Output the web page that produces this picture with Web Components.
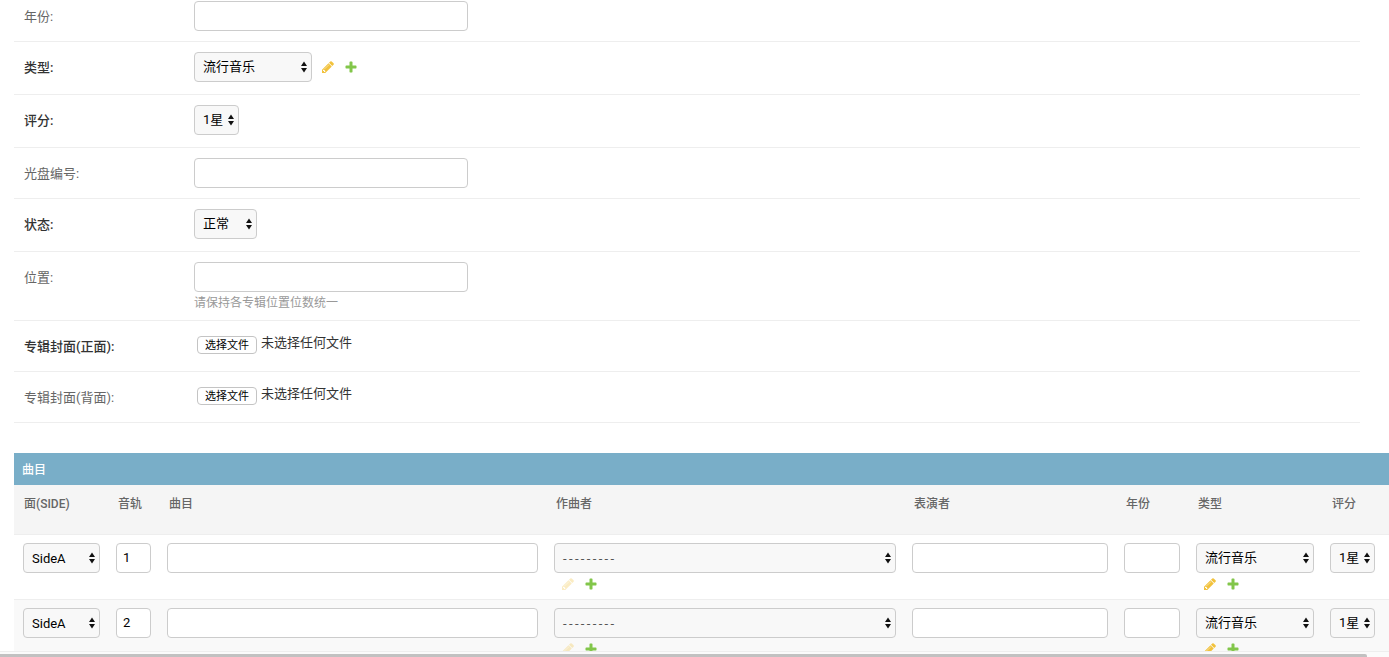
<!DOCTYPE html>
<html lang="zh">
<head>
<meta charset="utf-8">
<title>专辑</title>
<style>
  html, body {
    margin: 0;
    height: 657px;
    overflow: hidden;
    background: #fff;
    font: 13px Roboto, "Noto Sans CJK SC", sans-serif;
    color: #333;
  }
  /* latin option text sits a pixel lower than the cjk text in the reference */
  .latin {
    display: block;
    margin-top: 2px;
  }
  .dashes {
    letter-spacing: 2.35px;
    color: #555;
  }
</style>
</head>
<body>

<album-page>
  <form-row label="年份:"><ui-input></ui-input></form-row>
  <form-row label="类型:" required>
    <ui-select width="118">流行音乐</ui-select>
    <related-links slot="after"></related-links>
  </form-row>
  <form-row label="评分:" required><ui-select width="45">1星</ui-select></form-row>
  <form-row label="光盘编号:"><ui-input></ui-input></form-row>
  <form-row label="状态:" required><ui-select width="63">正常</ui-select></form-row>
  <form-row label="位置:" help="请保持各专辑位置位数统一"><ui-input></ui-input></form-row>
  <form-row label="专辑封面(正面):" required><file-input></file-input></form-row>
  <form-row label="专辑封面(背面):"><file-input></file-input></form-row>

  <inline-group title="曲目">
    <track-head>
      <span>面(SIDE)</span><span>音轨</span><span>曲目</span><span>作曲者</span>
      <span>表演者</span><span>年份</span><span>类型</span><span>评分</span>
    </track-head>
    <track-row>
      <ui-select><span class="latin">SideA</span></ui-select>
      <ui-input>1</ui-input>
      <ui-input></ui-input>
      <div><ui-select><span class="latin dashes">---------</span></ui-select><related-links stacked faded></related-links></div>
      <ui-input></ui-input>
      <ui-input></ui-input>
      <div><ui-select>流行音乐</ui-select><related-links stacked></related-links></div>
      <ui-select>1星</ui-select>
    </track-row>
    <track-row alt>
      <ui-select><span class="latin">SideA</span></ui-select>
      <ui-input>2</ui-input>
      <ui-input></ui-input>
      <div><ui-select><span class="latin dashes">---------</span></ui-select><related-links stacked faded></related-links></div>
      <ui-input></ui-input>
      <ui-input></ui-input>
      <div><ui-select>流行音乐</ui-select><related-links stacked></related-links></div>
      <ui-select>1星</ui-select>
    </track-row>
  </inline-group>
</album-page>

<script>
  (function () {

    // small helper, every element below just hands over its shadow markup
    function shadow(el, html) {
      el.attachShadow({ mode: 'open' }).innerHTML = html;
    }

    class AlbumPage extends HTMLElement {
      connectedCallback() {
        shadow(this, `
          <style>
            :host {
              display: block;
              position: relative;
              height: 657px;
              overflow: hidden;
            }
            .scroll {
              position: absolute;
              left: 0;
              right: 0;
              bottom: 0;
              height: 5px;
              background: #fbfbfb;
              border-top: 1px solid #eee;
            }
            .thumb {
              position: absolute;
              left: 0;
              bottom: 0;
              width: 1367px;
              height: 3px;
              background: #c1c1c1;
              border-radius: 0 2px 0 0;
            }
          </style>
          <slot></slot>
          <div class="scroll"><div class="thumb"></div></div>`);
      }
    }

    class FormRow extends HTMLElement {
      connectedCallback() {
        const help = this.getAttribute('help');
        shadow(this, `
          <style>
            :host {
              display: flex;
              margin: 0 29px 0 14px;
              padding: 10px 0 10px 10px;
              border-bottom: 1px solid #eee;
            }
            :host(:first-child) { padding-top: 1px; }
            label {
              width: 170px;
              flex: none;
              padding-top: 1px;
              line-height: 30px;
              height: 29px;
              color: #666;
            }
            :host([required]) label {
              color: #333;
              font-weight: 500;
            }
            .line { display: flex; }
            .help {
              margin-top: 4px;
              font-size: 12px;
              line-height: 14px;
              color: #999;
            }
          </style>
          <label>${this.getAttribute('label')}</label>
          <div>
            <div class="line"><slot></slot><slot name="after"></slot></div>
            ${help ? `<div class="help">${help}</div>` : ''}
          </div>`);
      }
    }

    class UiInput extends HTMLElement {
      connectedCallback() {
        shadow(this, `
          <style>
            :host {
              display: block;
              box-sizing: border-box;
              width: 274px;
              height: 30px;
              padding: 0 6px;
              line-height: 28px;
              background: #fff;
              border: 1px solid #ccc;
              border-radius: 4px;
              color: #000;
            }
            :host-context(track-row) { width: auto; }
          </style>
          <slot></slot>`);
      }
    }

    class UiSelect extends HTMLElement {
      connectedCallback() {
        const width = this.getAttribute('width');
        shadow(this, `
          <style>
            :host {
              display: flex;
              align-items: center;
              justify-content: space-between;
              box-sizing: border-box;
              width: ${width ? width + 'px' : 'auto'};
              height: 30px;
              margin-bottom: 2px;
              padding: 0 4px 0 8px;
              background: #f8f8f8;
              border: 1px solid #ccc;
              border-radius: 4px;
              color: #000;
              line-height: 20px;
              white-space: nowrap;
            }
            svg { flex: none; display: block; }
          </style>
          <slot></slot>
          <svg width="6" height="12" viewBox="0 0 6 12">
            <path d="M3 0.5 L6 5 H0 Z M0 7 H6 L3 11.5 Z" fill="#111"/>
          </svg>`);
      }
    }

    class RelatedLinks extends HTMLElement {
      connectedCallback() {
        shadow(this, `
          <style>
            :host {
              display: flex;
              gap: 9px;
              margin-left: 9px;
              height: 30px;
              align-items: center;
            }
            :host([stacked]) {
              height: 14px;
              margin: 4px 0 0 7px;
            }
            :host([faded]) .change { opacity: 0.3; }
            svg { display: block; width: 14px; height: 14px; }
          </style>
          <svg class="change" viewBox="0 0 1792 1792"><path fill="#f2c23c" d="M491 1536l91-91-235-235-91 91v107h128v128h107zm523-928q0-22-22-22-10 0-17 7l-542 542q-7 7-7 17 0 22 22 22 10 0 17-7l542-542q7-7 7-17zm-54-192l416 416-832 832h-416v-416zm683 96q0 53-37 90l-166 166-416-416 166-165q36-38 90-38 53 0 91 38l235 234q37 39 37 91z"/></svg>
          <svg viewBox="0 0 1792 1792"><path fill="#82c64a" d="M1600 796v192q0 40-28 68t-68 28h-416v416q0 40-28 68t-68 28h-192q-40 0-68-28t-28-68v-416h-416q-40 0-68-28t-28-68v-192q0-40 28-68t68-28h416v-416q0-40 28-68t68-28h192q40 0 68 28t28 68v416h416q40 0 68 28t28 68z"/></svg>`);
      }
    }

    class FileInput extends HTMLElement {
      connectedCallback() {
        shadow(this, `
          <style>
            :host {
              display: flex;
              align-items: flex-start;
              gap: 4px;
              margin-left: 3px;
              color: #333;
            }
            button {
              box-sizing: border-box;
              width: 60px;
              height: 18px;
              margin-top: 5px;
              padding: 1px 0 0;
              font: 11px Roboto, "Noto Sans CJK SC", sans-serif;
              line-height: 15px;
              color: #000;
              background: #fff;
              border: 1px solid #c4c4c4;
              border-radius: 4px;
            }
            span { line-height: 24px; }
          </style>
          <button type="button">选择文件</button><span>未选择任何文件</span>`);
      }
    }

    class InlineGroup extends HTMLElement {
      connectedCallback() {
        shadow(this, `
          <style>
            :host {
              display: block;
              margin: 30px 0 0 14px;
              --track-cols: 77px 35px 371px 342px 196px 56px 118px 45px;
            }
            h2 {
              box-sizing: border-box;
              margin: 0;
              height: 32px;
              padding: 1px 0 0 8px;
              font-size: 12px;
              font-weight: 500;
              line-height: 32px;
              color: #fff;
              background: #79aec8;
            }
          </style>
          <h2>${this.getAttribute('title')}</h2>
          <slot></slot>`);
      }
    }

    class TrackHead extends HTMLElement {
      connectedCallback() {
        shadow(this, `
          <style>
            :host {
              display: grid;
              grid-template-columns: var(--track-cols);
              column-gap: 16px;
              box-sizing: border-box;
              height: 50px;
              padding: 10px 0 0 9px;
              background: #f5f5f5;
              border-bottom: 1px solid #eee;
              font-size: 12px;
              font-weight: 500;
              line-height: 18px;
              color: #666;
            }
            ::slotted(span) { padding-left: 2px; }
            ::slotted(span:first-child) { padding-left: 1px; }
          </style>
          <slot></slot>`);
      }
    }

    class TrackRow extends HTMLElement {
      connectedCallback() {
        shadow(this, `
          <style>
            :host {
              display: grid;
              grid-template-columns: var(--track-cols);
              column-gap: 16px;
              align-items: start;
              box-sizing: border-box;
              height: 65px;
              padding: 8px 0 0 9px;
              background: #fff;
              border-bottom: 1px solid #eee;
            }
            :host([alt]) { background: #f9f9f9; }
          </style>
          <slot></slot>`);
      }
    }

    customElements.define('album-page', AlbumPage);
    customElements.define('form-row', FormRow);
    customElements.define('ui-input', UiInput);
    customElements.define('ui-select', UiSelect);
    customElements.define('related-links', RelatedLinks);
    customElements.define('file-input', FileInput);
    customElements.define('inline-group', InlineGroup);
    customElements.define('track-head', TrackHead);
    customElements.define('track-row', TrackRow);
  })();
</script>
</body>
</html>
